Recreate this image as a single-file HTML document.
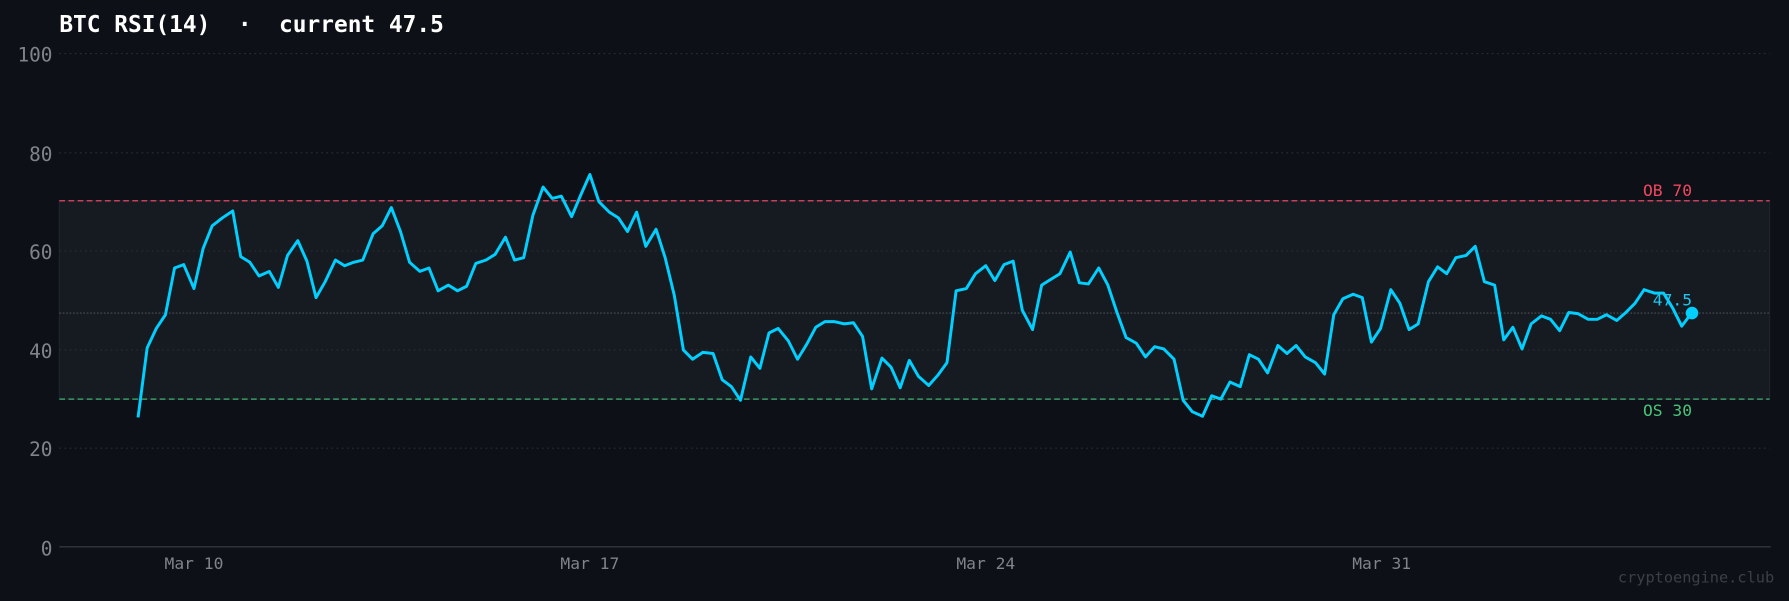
<!DOCTYPE html>
<html><head><meta charset="utf-8"><style>
html,body{margin:0;padding:0;background:#0d1017;}
svg{display:block;}
</style></head><body>
<svg width="1789" height="601" viewBox="0 0 1568 527" preserveAspectRatio="none" xmlns="http://www.w3.org/2000/svg" font-family="'DejaVu Sans Mono','Liberation Mono',monospace">
<rect width="1568" height="527" fill="#0d1017"/>
<rect x="52" y="176" width="1499" height="174" fill="#161a21" stroke="#20242b" stroke-width="1"/>
<g stroke="#2a2e33" stroke-width="1" stroke-dasharray="1.5,3">
<line x1="52" y1="47" x2="1551" y2="47"/>
<line x1="52" y1="134" x2="1551" y2="134"/>
<line x1="52" y1="220" x2="1551" y2="220"/>
<line x1="52" y1="307" x2="1551" y2="307"/>
<line x1="52" y1="393" x2="1551" y2="393"/>
</g>
<line x1="52" y1="274.5" x2="1551" y2="274.5" stroke="#5a5e63" stroke-width="0.8" stroke-dasharray="1.5,1.5"/>
<line x1="52" y1="176" x2="1551" y2="176" stroke="#c8405a" stroke-width="1.3" stroke-dasharray="5,3"/>
<line x1="52" y1="350" x2="1551" y2="350" stroke="#3a9a66" stroke-width="1.3" stroke-dasharray="5,3"/>
<line x1="52" y1="479.5" x2="1552" y2="479.5" stroke="#33373c" stroke-width="1.2"/>
<g fill="#80848a" font-size="17" text-anchor="end">
<text x="46" y="54">100</text>
<text x="46" y="141">80</text>
<text x="46" y="227">60</text>
<text x="46" y="314">40</text>
<text x="46" y="400">20</text>
<text x="46" y="487">0</text>
</g>
<g fill="#80848a" font-size="14.3" text-anchor="middle">
<text x="170" y="499">Mar 10</text>
<text x="517" y="499">Mar 17</text>
<text x="864" y="499">Mar 24</text>
<text x="1211" y="499">Mar 31</text>
</g>
<text x="52" y="28" fill="#ffffff" font-size="20.6" font-weight="bold" textLength="337" lengthAdjust="spacingAndGlyphs" xml:space="preserve">BTC RSI(14)  ·  current 47.5</text>
<text x="1483" y="172" fill="#f2475f" font-size="14.3" text-anchor="end">OB 70</text>
<text x="1483" y="365" fill="#48c478" font-size="14.3" text-anchor="end">OS 30</text>
<polyline fill="none" stroke="#00cfff" stroke-width="2.6" stroke-linejoin="round" points="121,366 129,305 137,288 145,276 153,235 161,232 170,253 178,218 186,198 195,191 204,185 211,225 219,230 227,242 236,238 244,252 252,224 261,211 269,229 277,261 285,247 294,228 302,233 310,230 318,228 327,205 335,198 343,182 351,203 359,230 368,238 376,235 384,255 393,250 401,255 409,251 417,231 426,228 434,223 443,208 451,228 459,226 467,189 476,164 484,174 492,172 501,190 509,171 517,153 525,177 534,186 542,191 550,203 558,186 566,216 575,201 583,226 591,259 599,307 607,315 616,309 625,310 633,333 641,339 649,351 658,313 666,323 674,292 682,288 691,299 699,315 707,302 715,287 723,282 731,282 740,284 748,283 756,295 764,341 773,314 781,322 789,340 797,316 805,330 814,338 822,329 830,318 838,255 847,253 855,240 864,233 872,246 880,232 888,229 896,272 905,289 913,250 921,245 929,240 938,221 946,248 954,249 963,235 971,250 979,274 987,296 996,301 1004,313 1012,304 1020,306 1029,315 1037,351 1045,361 1054,365 1062,347 1070,350 1078,335 1087,339 1095,311 1103,315 1111,327 1120,303 1128,310 1136,303 1144,313 1153,318 1161,328 1169,276 1177,262 1186,258 1194,261 1202,300 1210,288 1219,254 1227,266 1235,289 1243,284 1252,247 1260,234 1268,240 1276,226 1285,224 1293,216 1301,247 1310,250 1318,298 1326,287 1334,306 1342,284 1351,277 1359,280 1367,290 1375,274 1383,275 1392,280 1400,280 1408,276 1417,281 1425,274 1433,266 1441,254 1450,257 1458,257 1466,270 1474,286 1483,274"/>
<text x="1483" y="268" fill="#1cc6ee" font-size="14.3" text-anchor="end">47.5</text>
<circle cx="1483" cy="274.5" r="5.5" fill="#00cfff"/>
<text x="1555" y="511" fill="#3c4046" font-size="13.4" text-anchor="end">cryptoengine.club</text>
</svg>
</body></html>
